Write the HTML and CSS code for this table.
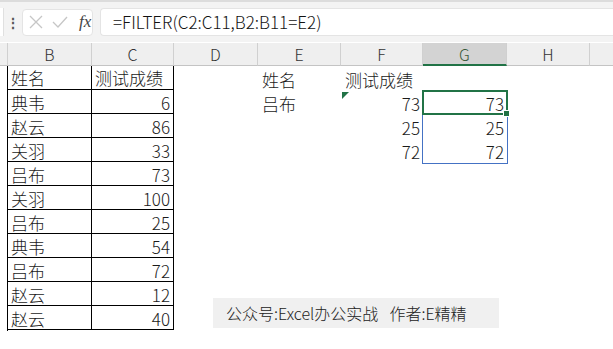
FILE: index.html
```html
<!DOCTYPE html>
<html lang="zh-CN">
<head>
    <meta charset="UTF-8">
    <title>FILTER</title>
    <link rel="stylesheet" href="styles.css">
</head>
<body>
    <!-- 编辑栏 -->
    <div class="topbar">
        <div class="namebox"></div>
        <div class="dots">⋮</div>
        <div class="fx-buttons">
            <svg width="14" height="14" viewBox="0 0 14 14"><path d="M1 1L13 13M13 1L1 13" stroke="#c6c6c6" stroke-width="1.3" fill="none"/></svg>
            <svg width="16" height="12" viewBox="0 0 16 12"><path d="M1 6L6 11L15 1" stroke="#c6c6c6" stroke-width="1.3" fill="none"/></svg>
            <span class="fx">fx</span>
        </div>
        <div class="formula">=FILTER(C2:C11,B2:B11=E2)</div>
    </div>

    <!-- 工作表 -->
    <div class="sheet">
        <div class="colhead first"></div>
        <div class="colhead">B</div>
        <div class="colhead">C</div>
        <div class="colhead">D</div>
        <div class="colhead">E</div>
        <div class="colhead">F</div>
        <div class="colhead active">G</div>
        <div class="colhead">H</div>
        <div class="colhead last"></div>

        <!-- 数据源 B1:C11 -->
        <div class="source" id="source"></div>

        <!-- 条件与结果 -->
        <div class="cell" style="grid-column:5;grid-row:2">姓名</div>
        <div class="cell" style="grid-column:6;grid-row:2">测试成绩</div>
        <div class="cell" style="grid-column:5;grid-row:3">吕布</div>
        <div class="cell num flag" style="grid-column:6;grid-row:3">73</div>
        <div class="cell num" style="grid-column:6;grid-row:4">25</div>
        <div class="cell num" style="grid-column:6;grid-row:5">72</div>
        <div class="cell num" style="grid-column:7;grid-row:3">73</div>
        <div class="cell num" style="grid-column:7;grid-row:4">25</div>
        <div class="cell num" style="grid-column:7;grid-row:5">72</div>
        <div class="spill"></div>
        <div class="selected"><span class="handle"></span></div>

        <div class="note">公众号:Excel办公实战&nbsp;&nbsp;作者:E精精</div>
    </div>

    <script>
        var rows = [
            ["姓名", "测试成绩"],
            ["典韦", 6], ["赵云", 86], ["关羽", 33], ["吕布", 73], ["关羽", 100],
            ["吕布", 25], ["典韦", 54], ["吕布", 72], ["赵云", 12], ["赵云", 40]
        ];
        var box = document.getElementById("source");
        rows.forEach(function (r, i) {
            box.innerHTML += '<div class="scell">' + r[0] + '</div>' +
                '<div class="scell' + (i ? ' num' : '') + '">' + r[1] + '</div>';
        });
    </script>
</body>
</html>
```

FILE: styles.css
```css
body {
    margin: 0;
    width: 613px;
    height: 349px;
    overflow: hidden;
    background: #fff;
    font-family: "Noto Sans CJK SC", "Microsoft YaHei", sans-serif;
    font-weight: 300;
    color: #1a1a1a;
}

/* 编辑栏 */
.topbar {
    height: 42px;
    background: #f3f3f3;
    border-top: 2px solid #dcdcdc;
    box-sizing: border-box;
    display: flex;
    align-items: center;
}
.namebox {
    width: 3px;
    height: 28px;
    background: #fff;
    border-right: 1px solid #e0e0e0;
}
.dots {
    width: 18px;
    text-align: center;
    font-size: 14px;
    color: #555;
    font-weight: bold;
}
.fx-buttons {
    width: 71px;
    height: 27px;
    background: #fff;
    border: 1px solid #e4e4e4;
    border-radius: 4px;
    box-sizing: border-box;
    display: flex;
    align-items: center;
    gap: 9px;
    padding-left: 6px;
}
.fx {
    font-family: "Liberation Serif", serif;
    font-style: italic;
    font-size: 17px;
    color: #444;
    margin-left: 2px;
}
.formula {
    flex: 1;
    height: 28px;
    margin-left: 7px;
    background: #fff;
    border: 1px solid #e4e4e4;
    border-right: none;
    border-radius: 4px 0 0 4px;
    box-sizing: border-box;
    font-size: 17px;
    line-height: 26px;
    padding-left: 12px;
    color: #111;
}

/* 表格 */
.sheet {
    position: relative;
    display: grid;
    grid-template-columns: 8px 84px 82px 84px 83px 82px 84px 83px 1fr;
    grid-template-rows: 24px;
    grid-auto-rows: 24px;
    margin-top: 1px;
}
.colhead {
    height: 23px;
    background: #efefef;
    border-right: 1px solid #d0d0d0;
    border-bottom: 1px solid #c4c4c4;
    box-sizing: border-box;
    text-align: center;
    font-size: 16px;
    line-height: 23px;
    color: #333;
}
.colhead.last {
    border-right: none;
}
.colhead.active {
    background: #d3d3d3;
    border-bottom: 2px solid #217346;
    color: #3a5a3a;
}

.source {
    grid-column: 2 / 4;
    grid-row: 2 / 13;
    margin-top: -1px;
    display: grid;
    grid-template-columns: 84px 82px;
    grid-auto-rows: 24px;
    border-left: 1px solid #000;
    margin-left: -1px;
}
.scell, .cell {
    font-size: 17px;
    line-height: 25px;
    padding: 0 3px;
    white-space: nowrap;
}
.scell {
    border-right: 1px solid #000;
    border-bottom: 1px solid #000;
    box-sizing: border-box;
}
.scell:nth-child(-n+2) {
    line-height: 24px;
}
.num {
    text-align: right;
}
.cell {
    padding: 0 3px 0 4px;
}
.flag {
    position: relative;
}
.flag::before {
    content: "";
    position: absolute;
    left: 1px;
    top: 1px;
    border-top: 7px solid #217346;
    border-right: 7px solid transparent;
}

/* 溢出区域与活动单元格 */
.spill {
    grid-column: 7;
    grid-row: 3 / 6;
    border: 1px solid #4472c4;
    margin: 0 -1px -1px -1px;
}
.selected {
    grid-column: 7;
    grid-row: 3;
    border: 2px solid #217346;
    margin: -1px -1px 0 -1px;
    position: relative;
}
.handle {
    position: absolute;
    right: -4px;
    bottom: -4px;
    width: 5px;
    height: 5px;
    background: #217346;
    border: 1px solid #fff;
}

.note {
    position: absolute;
    left: 213px;
    top: 255px;
    width: 286px;
    height: 30px;
    background: #f0f0f0;
    box-sizing: border-box;
    padding-left: 13px;
    font-size: 16px;
    line-height: 30px;
    color: #222;
    word-spacing: 2px;
}
```
